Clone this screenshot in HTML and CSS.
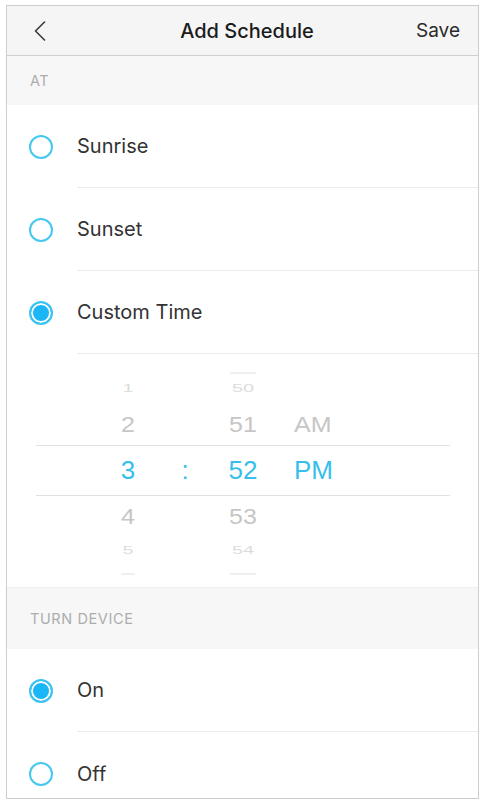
FILE: index.html
```html
<!DOCTYPE html>
<html lang="en">

<head>
    <meta charset="UTF-8">
    <title>Add Schedule</title>
    <link rel="stylesheet" href="styles.css">
</head>

<body>
    <div class="screen">
        <div class="nav-bar">
            <span class="nav-back">
                <svg width="12" height="20" viewBox="0 0 12 20">
                    <path d="M10.5 1 L1.5 10 L10.5 19" fill="none" stroke="#3a3a3a" stroke-width="1.6" stroke-linecap="round" stroke-linejoin="round" />
                </svg>
            </span>
            <span class="nav-title">Add Schedule</span>
            <span class="nav-save">Save</span>
        </div>

        <div class="section-head section-at">AT</div>

        <div class="option">
            <span class="radio"></span>
            <div class="option-label">Sunrise</div>
        </div>
        <div class="option">
            <span class="radio"></span>
            <div class="option-label">Sunset</div>
        </div>
        <div class="option">
            <span class="radio checked"></span>
            <div class="option-label">Custom Time</div>
        </div>

        <div class="picker">
            <div class="picker-row row-edge">
                <span class="col-min"><i class="dash"></i></span>
            </div>
            <div class="picker-row row-far">
                <span class="col-hour">1</span>
                <span class="col-min">50</span>
            </div>
            <div class="picker-row row-near">
                <span class="col-hour">2</span>
                <span class="col-min">51</span>
                <span class="col-ampm">AM</span>
            </div>
            <div class="picker-row row-selected">
                <span class="col-hour">3</span>
                <span class="col-colon">:</span>
                <span class="col-min">52</span>
                <span class="col-ampm">PM</span>
            </div>
            <div class="picker-row row-near row-below">
                <span class="col-hour">4</span>
                <span class="col-min">53</span>
            </div>
            <div class="picker-row row-far row-bottom">
                <span class="col-hour">5</span>
                <span class="col-min">54</span>
            </div>
            <div class="picker-row row-edge">
                <span class="col-hour"><i class="dash short"></i></span>
                <span class="col-min"><i class="dash"></i></span>
            </div>
        </div>

        <div class="section-head section-turn">TURN DEVICE</div>

        <div class="option">
            <span class="radio checked"></span>
            <div class="option-label">On</div>
        </div>
        <div class="option">
            <span class="radio"></span>
            <div class="option-label no-line">Off</div>
        </div>
    </div>
</body>

</html>
```

FILE: styles.css
```css
body {
    margin: 0;
    background: #ffffff;
    font-family: "Inter", "Liberation Sans", sans-serif;
}

.screen {
    box-sizing: border-box;
    width: 473px;
    height: 794px;
    margin: 5px 0 0 6px;
    border: 1px solid #cdcdcd;
    overflow: hidden;
    background: #ffffff;
}

.nav-bar {
    display: flex;
    align-items: center;
    justify-content: space-between;
    height: 49px;
    padding: 0 18px 0 27px;
    background: #f5f5f5;
    border-bottom: 1px solid #cfcfcf;
}

.nav-back {
    display: flex;
    width: 70px;
}

.nav-title {
    font-size: 20px;
    font-weight: 500;
    color: #1b1b1b;
}

.nav-save {
    width: 70px;
    text-align: right;
    font-size: 19px;
    color: #2a2a2a;
}

.section-head {
    display: flex;
    align-items: center;
    padding-left: 23px;
    background: #f7f7f7;
    font-size: 14.5px;
    color: #adadad;
    letter-spacing: 0.6px;
}

.section-at {
    height: 49px;
}

.section-turn {
    height: 61px;
    border-top: 1px solid #eeeeee;
}

.option {
    display: flex;
    align-items: center;
    padding-left: 22px;
    height: 83px;
}

.radio {
    box-sizing: border-box;
    flex: none;
    width: 24px;
    height: 24px;
    border: 2px solid #45c8ee;
    border-radius: 50%;
    margin-right: 24px;
}

.radio.checked {
    border: 2px solid #3bc3f2;
    background: #1bb6f6;
    box-shadow: inset 0 0 0 2px #ffffff;
}

.option-label {
    flex: 1;
    display: flex;
    align-items: center;
    align-self: stretch;
    border-bottom: 1px solid #ebebeb;
    font-size: 20px;
    color: #333333;
}

.option-label.no-line {
    border-bottom: none;
}

.picker {
    display: flex;
    flex-direction: column;
    height: 233px;
    padding: 9px 28px 0 29px;
    box-sizing: border-box;
    font-family: "Liberation Sans", sans-serif;
}

.picker-row {
    display: grid;
    grid-template-columns: 62px 60px 54px 62px 20px auto;
    align-items: center;
    text-align: center;
}

.col-hour {
    grid-column: 2;
}

.col-colon {
    grid-column: 3;
}

.col-min {
    grid-column: 4;
}

.col-ampm {
    grid-column: 6;
    text-align: left;
}

.row-edge {
    height: 10px;
}

.row-far {
    height: 30px;
    font-size: 20px;
    color: #dcdcdc;
    transform: scaleY(0.55);
}

.row-near {
    height: 42px;
    font-size: 25px;
    color: #c6c6c6;
    transform: scaleY(0.88);
}

.row-below {
    height: 40px;
}

.row-bottom {
    height: 28px;
}

.row-selected {
    box-sizing: border-box;
    height: 51px;
    border-top: 1px solid #e1e1e1;
    border-bottom: 1px solid #e1e1e1;
    font-size: 26px;
    color: #36bfec;
}

.dash {
    display: inline-block;
    width: 26px;
    height: 2px;
    background: #efefef;
    vertical-align: middle;
}

.dash.short {
    width: 14px;
}
```
